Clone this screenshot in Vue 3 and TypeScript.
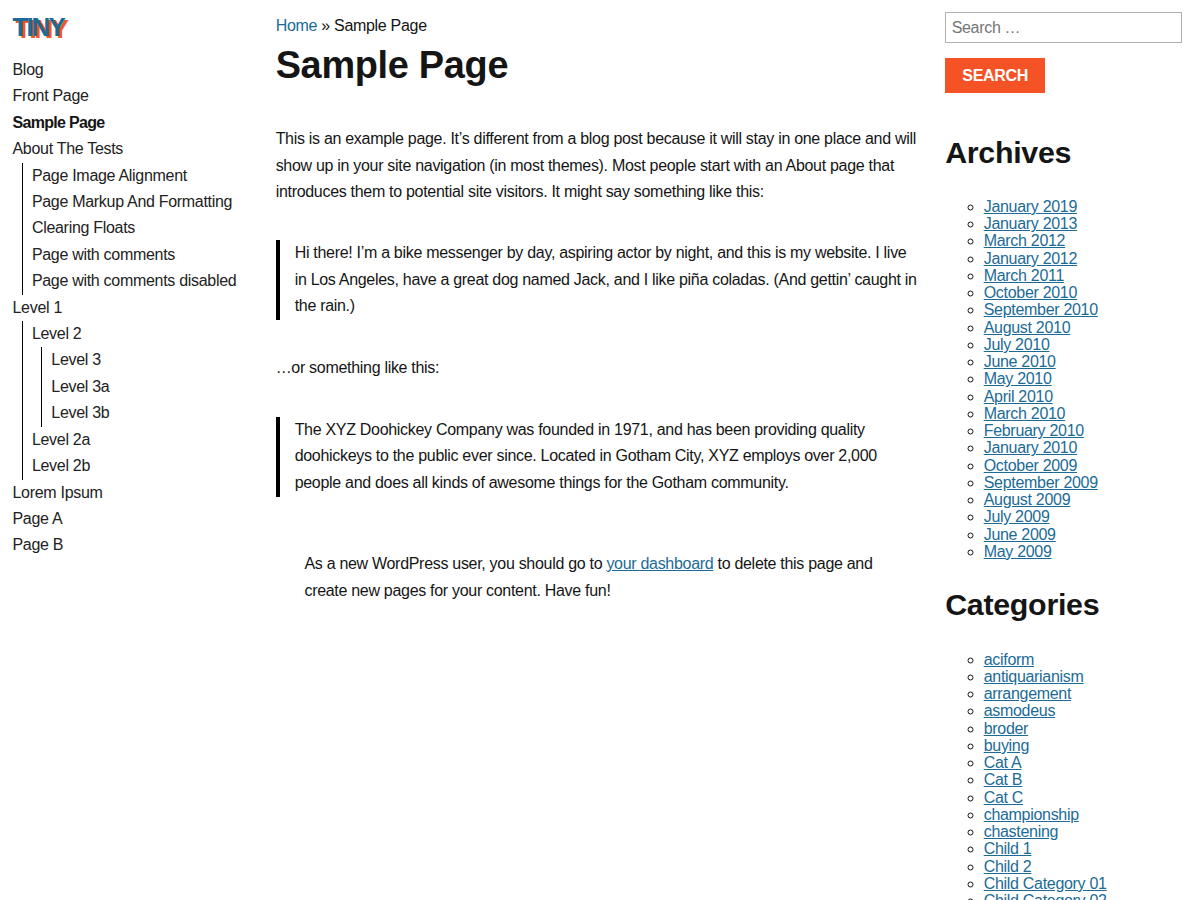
<script setup lang="ts">
interface NavItem { label: string; current?: boolean; children?: NavItem[] }
const nav: NavItem[] = [
  { label: 'Blog' },
  { label: 'Front Page' },
  { label: 'Sample Page', current: true },
  { label: 'About The Tests', children: [
    { label: 'Page Image Alignment' },
    { label: 'Page Markup And Formatting' },
    { label: 'Clearing Floats' },
    { label: 'Page with comments' },
    { label: 'Page with comments disabled' },
  ] },
  { label: 'Level 1', children: [
    { label: 'Level 2', children: [
      { label: 'Level 3' }, { label: 'Level 3a' }, { label: 'Level 3b' },
    ] },
    { label: 'Level 2a' },
    { label: 'Level 2b' },
  ] },
  { label: 'Lorem Ipsum' },
  { label: 'Page A' },
  { label: 'Page B' },
]
const archives = ['January 2019','January 2013','March 2012','January 2012','March 2011','October 2010','September 2010','August 2010','July 2010','June 2010','May 2010','April 2010','March 2010','February 2010','January 2010','October 2009','September 2009','August 2009','July 2009','June 2009','May 2009']
const categories = ['aciform','antiquarianism','arrangement','asmodeus','broder','buying','Cat A','Cat B','Cat C','championship','chastening','Child 1','Child 2','Child Category 01','Child Category 02']
</script>

<template>
  <div class="page">
    <aside class="left">
      <a class="logo">TINY</a>
      <ul class="nav">
        <li v-for="item in nav" :key="item.label">
          <a :class="{ current: item.current }">{{ item.label }}</a>
          <ul v-if="item.children" class="sub">
            <li v-for="c in item.children" :key="c.label">
              <a>{{ c.label }}</a>
              <ul v-if="c.children" class="sub">
                <li v-for="d in c.children" :key="d.label"><a>{{ d.label }}</a></li>
              </ul>
            </li>
          </ul>
        </li>
      </ul>
    </aside>
    <main class="main">
      <div class="crumbs"><a href="#">Home</a> » Sample Page</div>
      <h1>Sample Page</h1>
      <p class="first">This is an example page. It’s different from a blog post because it will stay in one place and will show up in your site navigation (in most themes). Most people start with an About page that introduces them to potential site visitors. It might say something like this:</p>
      <blockquote class="quote-a">Hi there! I’m a bike messenger by day, aspiring actor by night, and this is my website. I live in Los Angeles, have a great dog named Jack, and I like piña coladas. (And gettin’ caught in the rain.)</blockquote>
      <p class="between">…or something like this:</p>
      <blockquote class="quote-b">The XYZ Doohickey Company was founded in 1971, and has been providing quality doohickeys to the public ever since. Located in Gotham City, XYZ employs over 2,000 people and does all kinds of awesome things for the Gotham community.</blockquote>
      <p class="note">As a new WordPress user, you should go to <a href="#">your dashboard</a> to delete this page and create new pages for your content. Have fun!</p>
    </main>
    <aside class="right">
      <input class="search" placeholder="Search …" />
      <button class="btn">SEARCH</button>
      <h2 class="first-h">Archives</h2>
      <ul class="links">
        <li v-for="a in archives" :key="a"><a href="#">{{ a }}</a></li>
      </ul>
      <h2>Categories</h2>
      <ul class="links cats">
        <li v-for="c in categories" :key="c"><a href="#">{{ c }}</a></li>
      </ul>
    </aside>
  </div>
</template>

<style>
html, body { margin: 0; background: #fff; }
</style>

<style scoped>
.page {
  display: grid;
  grid-template-columns: 236.6px 643px 236.6px;
  column-gap: 26.56px;
  padding: 0 18px 0 12.5px;
  height: 900px;
  overflow: hidden;
  box-sizing: border-box;
  font-family: "Liberation Sans", Arial, sans-serif;
  font-size: 16px;
  letter-spacing: -0.3px;
  color: #151515;
}
a { color: #1b6b96; }
.left { padding-top: 12px; }
.logo {
  display: block;
  font-size: 26px;
  font-weight: 700;
  line-height: 30px;
  letter-spacing: -2px;
  color: #1b6b96;
  text-shadow: 3px 2px 0 #f55225;
  margin-bottom: 15px;
}
.nav, .sub { list-style: none; margin: 0; padding: 0; line-height: 26.4px; }
.nav a { color: #222; }
.nav a.current { font-weight: 700; letter-spacing: -0.69px; color: #151515; }
.sub { margin-left: 9.6px; padding-left: 8.8px; border-left: 1px solid #000; }
.main { padding-top: 12.5px; }
.crumbs { line-height: 26.6px; }
.crumbs a { text-decoration: none; }
h1 { font-size: 37.9px; line-height: 1.2; margin: 3.5px 0 0; }
.main p, blockquote { line-height: 26.7px; margin: 0; }
.main p.first { margin-top: 38px; }
blockquote { padding-left: 15px; border-left: 4px solid #000; }
.quote-a { margin-top: 33.8px; }
.main p.between { margin-top: 35.3px; }
.quote-b { margin-top: 34.5px; }
.main p.note { margin-top: 54.3px; padding: 0 28.8px; }
.right { padding-top: 12px; }
.search {
  display: block;
  box-sizing: border-box;
  width: 100%;
  height: 31px;
  border: 1px solid #b0b0b0;
  padding: 0 5.5px;
  font: 16px "Liberation Sans", Arial, sans-serif;
  letter-spacing: -0.32px;
  outline: none;
  border-radius: 0;
}
.search::placeholder { color: #757575; }
.btn {
  display: block;
  margin-top: 15px;
  width: 100px;
  height: 35px;
  border: 0;
  border-radius: 0;
  background: #f55225;
  color: #fff;
  font: 700 16px "Liberation Sans", Arial, sans-serif;
  letter-spacing: -0.32px;
  padding: 0;
}
h2 { font-size: 30.4px; line-height: 1.2; margin: 26px 0 0; }
h2.first-h { margin-top: 41px; }
.links { margin: 27.5px 0 0; padding-left: 38.5px; line-height: 17.25px; list-style: circle; }
.links.cats { margin-top: 28px; }
</style>
